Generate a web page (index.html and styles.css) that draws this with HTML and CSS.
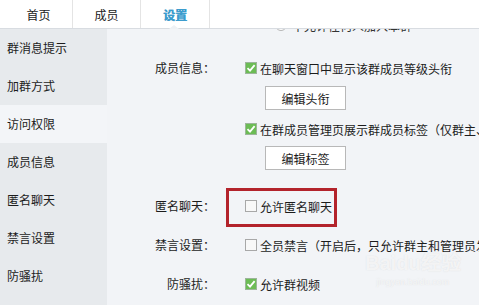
FILE: index.html
```html
<!DOCTYPE html>
<html lang="zh-CN">

<head>
    <meta charset="UTF-8">
    <meta name="viewport" content="width=device-width, initial-scale=1.0">
    <title>群设置</title>
    <link rel="stylesheet" href="styles.css">
</head>

<body>
    <div class="tabs">
        <div class="tab">首页</div>
        <div class="tab">成员</div>
        <div class="tab active">设置</div>
    </div>

    <div class="main">
        <ul class="side">
            <li>群消息提示</li>
            <li>加群方式</li>
            <li class="current">访问权限</li>
            <li>成员信息</li>
            <li>匿名聊天</li>
            <li>禁言设置</li>
            <li>防骚扰</li>
        </ul>

        <div class="panel">
            <div class="panel-inner">
                <div class="group">
                    <div class="label"></div>
                    <div class="ctrl">
                        <div class="row radio-row"><span class="radio"></span>不允许任何人加入本群</div>
                    </div>
                </div>

                <div class="group member">
                    <div class="label">成员信息：</div>
                    <div class="ctrl">
                        <div class="row"><span class="box checked"></span>在聊天窗口中显示该群成员等级头衔</div>
                        <button class="btn">编辑头衔</button>
                        <div class="row second"><span class="box checked"></span>在群成员管理页展示群成员标签（仅群主、管理员可编辑）</div>
                        <button class="btn btn-last">编辑标签</button>
                    </div>
                </div>

                <div class="group anon">
                    <div class="label">匿名聊天：</div>
                    <div class="ctrl">
                        <div class="row marked">
                            <span class="box"></span>允许匿名聊天
                            <div class="red-frame"></div>
                        </div>
                    </div>
                </div>

                <div class="group mute">
                    <div class="label">禁言设置：</div>
                    <div class="ctrl">
                        <div class="row"><span class="box"></span>全员禁言（开启后，只允许群主和管理员发言）</div>
                    </div>
                </div>

                <div class="group harass">
                    <div class="label">防骚扰：</div>
                    <div class="ctrl">
                        <div class="row"><span class="box checked"></span>允许群视频</div>
                    </div>
                </div>
            </div>

            <div class="watermark">
                <div class="wm-logo">Bai<span class="paw">du</span>经验</div>
                <div class="wm-url">jingyan.baidu.com</div>
            </div>
        </div>
    </div>
</body>

</html>
```

FILE: styles.css
```css
body {
    margin: 0;
    width: 479px;
    height: 305px;
    overflow: hidden;
    font-family: "Noto Sans CJK SC", "Liberation Sans", sans-serif;
    font-size: 12px;
    color: #1c1c1c;
    background-color: #f2f4f7;
}

.tabs {
    display: flex;
    height: 28px;
    padding-left: 5px;
    background-color: #fff;
    border-bottom: 1px solid #d8dce1;
}

.tab {
    position: relative;
    width: 67px;
    line-height: 29px;
    text-align: center;
    font-size: 12px;
    color: #222;
    border-right: 1px solid #e4e4e4;
}

.tab.active {
    width: 68px;
    color: #3c9ccd;
    font-weight: bold;
    text-shadow: 0.4px 0 0 #3c9ccd;
}

/* small notch under selected tab */
.tab.active::after {
    content: "";
    position: absolute;
    left: 28px;
    bottom: -1px;
    border-left: 5px solid transparent;
    border-right: 5px solid transparent;
    border-bottom: 4px solid #eef1f4;
}

.main {
    display: flex;
    height: 276px;
}

.side {
    flex: none;
    width: 107px;
    margin: 0;
    padding: 0;
    list-style: none;
    background-color: #e7eaed;
}

.side li {
    height: 38px;
    line-height: 38px;
    padding-left: 7px;
    font-size: 12px;
}

.side li.current {
    background-color: #f3f5f8;
}

.panel {
    position: relative;
    flex: 1;
    min-width: 0;
    overflow: hidden;
}

.panel-inner {
    margin-top: -14px;
}

.group {
    display: flex;
}

.label {
    flex: none;
    width: 108px;
    line-height: 20px;
    text-align: right;
    white-space: nowrap;
}

.ctrl {
    flex: none;
    padding-left: 30px;
}

.row {
    display: flex;
    align-items: center;
    height: 20px;
    white-space: nowrap;
}

.radio-row {
    padding-left: 30px;
    color: #333;
}

.radio {
    width: 10px;
    height: 10px;
    margin-right: 5px;
    border: 1px solid #b5b5b5;
    border-radius: 50%;
    background-color: #fff;
}

.box {
    box-sizing: border-box;
    width: 12px;
    height: 12px;
    margin-right: 3px;
    border: 1px solid #a8a8a8;
    background-color: #f8f8f8;
}

.box.checked {
    border-color: #9cb59a;
    background-color: #6cbc55;
    background-image: url("data:image/svg+xml,%3Csvg xmlns='http://www.w3.org/2000/svg' viewBox='0 0 10 10'%3E%3Cpath d='M1.5 5.2 L4 7.6 L8.6 2.2' fill='none' stroke='white' stroke-width='1.8'/%3E%3C/svg%3E");
    background-size: 10px 10px;
}

.member {
    margin-top: 23px;
}

.btn {
    display: block;
    width: 81px;
    height: 24px;
    margin: 8px 0 0 20px;
    padding: 0;
    font-family: inherit;
    font-size: 12px;
    color: #1c1c1c;
    background-color: #fff;
    border: 1px solid #b8b8b8;
}

.row.second {
    margin-top: 9px;
}

.btn-last {
    margin-top: 7px;
}

.anon {
    margin-top: 26px;
}

.marked {
    position: relative;
}

.red-frame {
    position: absolute;
    left: -19px;
    top: -8px;
    width: 105px;
    height: 33px;
    border: 3px solid #b3232b;
}

.mute {
    margin-top: 19px;
}

.harass {
    margin-top: 19px;
}

.watermark {
    position: absolute;
    left: 258px;
    top: 222px;
    text-align: center;
    color: rgba(255, 255, 255, 0.7);
    text-shadow: 0 0 1px rgba(170, 170, 170, 0.35);
}

.wm-logo {
    font-family: "Liberation Sans", sans-serif;
    font-size: 20px;
    font-weight: bold;
    line-height: 24px;
}

.wm-url {
    font-family: "Liberation Sans", sans-serif;
    font-size: 9px;
    line-height: 14px;
}
```
